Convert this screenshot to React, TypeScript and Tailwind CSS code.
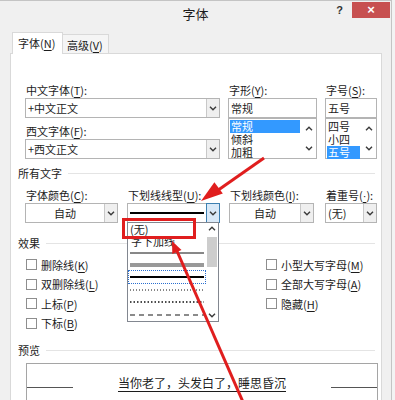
import React from "react";

const U = ({ children }: { children: React.ReactNode }) => (
  <span className="underline underline-offset-[2px]">{children}</span>
);

function Chevron({ up = false }: { up?: boolean }) {
  return (
    <svg width="8" height="5" viewBox="0 0 8 5">
      <path
        d={up ? "M1 4.2L4 1.2L7 4.2" : "M1 0.8L4 3.8L7 0.8"}
        fill="none"
        stroke="#3a3a3a"
        strokeWidth="1.4"
      />
    </svg>
  );
}

function Label({ children }: { children: React.ReactNode }) {
  return <div className="h-[16px] whitespace-nowrap pl-[1px] leading-[16px]">{children}</div>;
}

function Combo({
  children,
  center = false,
  active = false,
}: {
  children: React.ReactNode;
  center?: boolean;
  active?: boolean;
}) {
  return (
    <div className="flex h-[20px] border border-[#b4b4b4] bg-white">
      <div className={`flex flex-1 items-center px-[2px] leading-[18px] ${center ? "justify-center" : ""}`}>
        {children}
      </div>
      {active ? (
        <div className="-my-px -mr-px flex w-[14px] items-center justify-center border border-[#3c7fb1] bg-[#d9e9f8]">
          <Chevron />
        </div>
      ) : (
        <div className="flex w-[13px] items-center justify-center border-l border-[#c8c8c8] bg-[#efefef]">
          <Chevron />
        </div>
      )}
    </div>
  );
}

function TextBox({ children }: { children: React.ReactNode }) {
  return (
    <div className="flex h-[20px] items-center border border-[#b4b4b4] bg-white px-[2px] leading-[18px]">
      {children}
    </div>
  );
}

function ListBox({ items, sel }: { items: string[]; sel: string }) {
  return (
    <div className="flex h-[41px] border border-[#b4b4b4] bg-white">
      <div className="flex flex-1 flex-col p-[1px]">
        {items.map((t) => (
          <div
            key={t}
            className={`h-[13px] pl-[1px] leading-[13px] ${t === sel ? "bg-[#3399ff] text-white" : ""}`}
          >
            {t}
          </div>
        ))}
      </div>
      <div className="flex w-[15px] flex-col items-center justify-between py-[7px]">
        <Chevron up />
        <Chevron />
      </div>
    </div>
  );
}

function Group({ title }: { title: string }) {
  return (
    <div className="flex h-[16px] items-center gap-[6px] pl-[7px] pr-[6px] leading-[16px]">
      <span>{title}</span>
      <div className="h-px flex-1 bg-[#e4e4e4]" />
    </div>
  );
}

function Check({ children, h }: { children: React.ReactNode; h: string }) {
  return (
    <div className={`flex items-center gap-[4px] ${h}`}>
      <div className="h-[11px] w-[11px] border border-[#8e8e8e] bg-white" />
      <span className="leading-[16px]">{children}</span>
    </div>
  );
}

function LineSample({ kind }: { kind: string }) {
  return (
    <svg width="74" height="4" viewBox="0 0 74 4">
      {kind === "solid" && <line x1="0" y1="2" x2="74" y2="2" stroke="#111" strokeWidth="1" />}
      {kind === "double" && (
        <>
          <line x1="0" y1="1" x2="74" y2="1" stroke="#333" strokeWidth="1" />
          <line x1="0" y1="3" x2="74" y2="3" stroke="#333" strokeWidth="1" />
        </>
      )}
      {kind === "thick" && <line x1="0" y1="2" x2="74" y2="2" stroke="#000" strokeWidth="2" />}
      {kind === "dot" && (
        <line x1="0" y1="2" x2="74" y2="2" stroke="#111" strokeWidth="1" strokeDasharray="1 2" />
      )}
      {kind === "dot2" && (
        <line x1="0" y1="2" x2="74" y2="2" stroke="#111" strokeWidth="1.5" strokeDasharray="1.5 2" />
      )}
      {kind === "dash" && (
        <line x1="0" y1="2" x2="74" y2="2" stroke="#666" strokeWidth="1.5" strokeDasharray="5 4" />
      )}
    </svg>
  );
}

function LineDropdown() {
  return (
    <div className="absolute left-0 top-[35px] z-10 flex h-[100px] w-[92px] border border-[#828790] bg-white">
      <div className="flex flex-1 flex-col">
        <div className="h-[12px] pl-[2px] leading-[12px]">(无)</div>
        <div className="h-[12px] pl-[3px] leading-[12px]">字下加线</div>
        <div className="flex h-[12px] items-center px-[2px]">
          <LineSample kind="solid" />
        </div>
        <div className="flex h-[11px] items-center px-[2px]">
          <LineSample kind="double" />
        </div>
        <div className="flex h-[14px] items-center border border-dotted border-[#2a6fd0] px-[1px]">
          <LineSample kind="thick" />
        </div>
        <div className="flex h-[12px] items-center px-[2px]">
          <LineSample kind="dot" />
        </div>
        <div className="flex h-[12px] items-center px-[2px]">
          <LineSample kind="dot2" />
        </div>
        <div className="flex h-[13px] items-center px-[2px]">
          <LineSample kind="dash" />
        </div>
      </div>
      <div className="flex w-[12px] flex-col items-center">
        <div className="flex h-[11px] items-center">
          <Chevron up />
        </div>
        <div className="mt-[3px] h-[30px] w-[10px] bg-[#cdcdcd]" />
        <div className="flex-1" />
        <div className="flex h-[11px] items-center">
          <Chevron />
        </div>
      </div>
    </div>
  );
}

export default function App() {
  return (
    <div className="relative h-[400px] w-[395px] overflow-hidden bg-[#f3f3f3] font-['Noto_Sans_CJK_SC','Microsoft_YaHei',sans-serif] text-[11px] text-[#1c1c1c]">
      <div className="h-[400px] w-[392px] border-r border-t border-[#c4c4c4] bg-[#f0f0f0]">
        {/* title bar */}
        <div className="grid h-[27px] grid-cols-[1fr_auto_1fr]">
          <div />
          <div className="pt-[4px] text-[13px] leading-[18px]">字体</div>
          <div className="flex items-start justify-end">
            <span className="mt-[2px] font-['Liberation_Sans',sans-serif] text-[11px] font-bold leading-[14px] text-[#333]">
              ?
            </span>
            <div className="ml-[9px] mr-[1px] mt-[1px] flex h-[16px] w-[38px] items-center justify-center bg-[#c75050] font-['Liberation_Sans',sans-serif] text-[13px] font-bold leading-[16px] text-white">
              ×
            </div>
          </div>
        </div>

        {/* tabs */}
        <div className="mt-[4px] flex h-[21px] items-end pl-[12px]">
          <div className="relative z-10 -mb-px h-[22px] w-[51px] border-x border-t border-[#d9d9d9] bg-white pl-[5px] leading-[21px]">
            字体(<U>N</U>)
          </div>
          <div className="h-[19px] w-[46px] border-r border-t border-[#d9d9d9] bg-[#f5f5f5] pl-[4px] leading-[20px]">
            高级(<U>V</U>)
          </div>
        </div>

        {/* panel */}
        <div className="ml-[10px] h-[360px] w-[372px] border border-[#d9d9d9] bg-white pt-[28px]">
          <div className="flex pl-[14px]">
            <div className="w-[195px]">
              <Label>
                中文字体(<U>T</U>):
              </Label>
              <Combo>+中文正文</Combo>
              <div className="mt-[5px]">
                <Label>
                  西文字体(<U>F</U>):
                </Label>
              </div>
              <Combo>+西文正文</Combo>
            </div>
            <div className="ml-[8px] w-[89px]">
              <Label>
                字形(<U>Y</U>):
              </Label>
              <TextBox>常规</TextBox>
              <ListBox items={["常规", "倾斜", "加粗"]} sel="常规" />
            </div>
            <div className="ml-[8px] w-[52px]">
              <Label>
                字号(<U>S</U>):
              </Label>
              <TextBox>五号</TextBox>
              <ListBox items={["四号", "小四", "五号"]} sel="五号" />
            </div>
          </div>

          <div className="mt-[6px]">
            <Group title="所有文字" />
          </div>

          <div className="mt-[6px] flex pl-[14px]">
            <div className="w-[93px]">
              <Label>
                字体颜色(<U>C</U>):
              </Label>
              <Combo center>自动</Combo>
            </div>
            <div className="relative ml-[9px] w-[93px]">
              <Label>
                下划线线型(<U>U</U>):
              </Label>
              <Combo active>
                <div className="h-[2px] w-full bg-black" />
              </Combo>
              <LineDropdown />
            </div>
            <div className="ml-[9px] w-[85px]">
              <Label>
                下划线颜色(<U>I</U>):
              </Label>
              <Combo center>自动</Combo>
            </div>
            <div className="ml-[11px] w-[52px]">
              <Label>
                着重号(<span className="font-['Liberation_Sans',sans-serif] underline underline-offset-[2px]">·</span>):
              </Label>
              <Combo>(无)</Combo>
            </div>
          </div>

          <div className="mt-[12px]">
            <Group title="效果" />
          </div>

          <div className="mt-[4px] flex pl-[15px]">
            <div className="w-[240px]">
              <Check h="h-[19px]">
                删除线(<U>K</U>)
              </Check>
              <Check h="h-[20px]">
                双删除线(<U>L</U>)
              </Check>
              <Check h="h-[19px]">
                上标(<U>P</U>)
              </Check>
              <Check h="h-[20px]">
                下标(<U>B</U>)
              </Check>
            </div>
            <div>
              <Check h="h-[19px]">
                小型大写字母(<U>M</U>)
              </Check>
              <Check h="h-[20px]">
                全部大写字母(<U>A</U>)
              </Check>
              <Check h="h-[19px]">
                隐藏(<U>H</U>)
              </Check>
            </div>
          </div>

          <div className="mt-[9px]">
            <Group title="预览" />
          </div>

          <div className="ml-[15px] mt-[5px] h-[60px] w-[352px] border border-[#a5a5a5] pt-[10px]">
            <div className="flex h-[17px] justify-between">
              <div className="mb-[3px] h-px w-[46px] self-end bg-[#555]" />
              <span className="text-[12px] leading-[17px] underline underline-offset-[3px]">当你老了，头发白了，睡思昏沉</span>
              <div className="mb-[3px] h-px w-[46px] self-end bg-[#555]" />
            </div>
          </div>
        </div>
      </div>

      {/* red highlight annotations */}
      <div className="absolute left-[122px] top-[218px] z-20 h-[21px] w-[74px] border-[3px] border-[#e01e1e]" />
      <svg className="pointer-events-none absolute inset-0 z-20" width="395" height="400" viewBox="0 0 395 400">
        <line x1="264" y1="158" x2="214" y2="193" stroke="#e01e1e" strokeWidth="3" />
        <polygon points="201,201 222.8,193.4 214.4,182.2" fill="#e01e1e" />
        <line x1="243" y1="402" x2="177" y2="251" stroke="#e01e1e" strokeWidth="3" />
        <polygon points="172,241 181.5,250 172.3,254" fill="#e01e1e" />
      </svg>
    </div>
  );
}
